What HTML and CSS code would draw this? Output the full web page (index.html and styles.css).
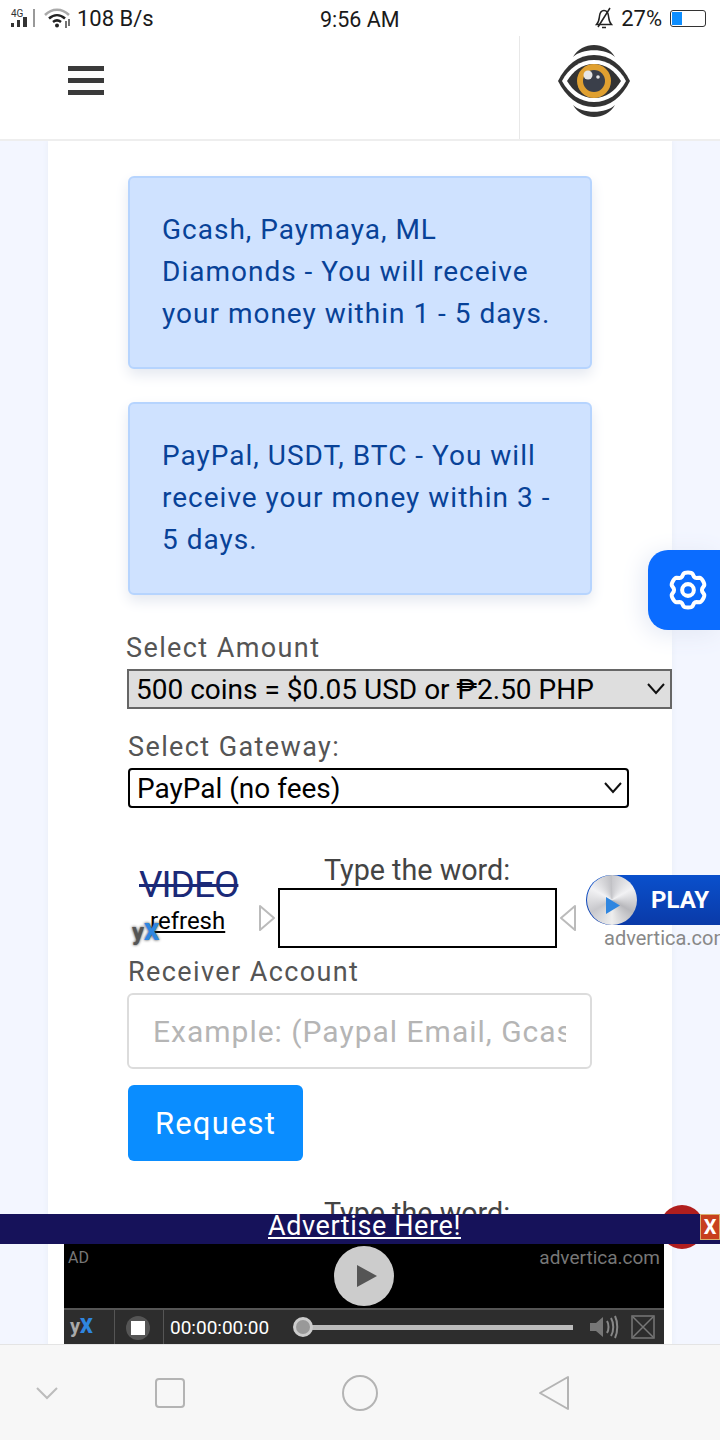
FILE: index.html
```html
<!DOCTYPE html>
<html lang="en">
<head>
  <meta charset="UTF-8">
  <meta name="viewport" content="width=device-width, initial-scale=1.0">
  <title>Withdraw</title>
  <link rel="stylesheet" href="styles.css">
</head>
<body>
<div class="screen">

  <div class="status">
    <div class="status-left">
      <svg class="status-signal" width="26" height="18" viewBox="0 0 26 18">
        <text x="1" y="8" class="status-4g">4G</text>
        <rect x="1" y="14" width="3" height="4" fill="#333"/>
        <rect x="7" y="11" width="3" height="7" fill="#333"/>
        <rect x="13" y="8" width="4" height="10" fill="#333"/>
        <rect x="23" y="0" width="2" height="18" fill="#999"/>
      </svg>
      <svg width="28" height="20" viewBox="0 0 28 20" fill="none">
        <path d="M1 7C8 0 18 0 25 7" stroke="#aaa" stroke-width="2.5"/>
        <path d="M5 10.5C10 6 16 6 21 10.5" stroke="#222" stroke-width="2.5"/>
        <path d="M9 14C11.5 12 14.5 12 17 14" stroke="#222" stroke-width="2.5"/>
        <circle cx="13" cy="17.5" r="2" fill="#222"/>
        <path d="M22 13V20M25 11V18" stroke="#444" stroke-width="1.5"/>
      </svg>
      <span class="status-speed">108 B/s</span>
    </div>
    <div class="status-time">9:56 AM</div>
    <div class="status-right">
      <svg width="18" height="22" viewBox="0 0 18 22" fill="none" stroke="#222" stroke-width="1.5">
        <path d="M1.5 17.5C4 15 4 13 4.5 9C5 5 7 3.5 9 3.5C11 3.5 13 5 13.5 9C14 13 14 15 16.5 17.5Z"/>
        <path d="M7 20.5H11M15 1L3 20"/>
      </svg>
      <span>27%</span>
      <div class="battery"><div class="battery-level"></div></div>
    </div>
  </div>

  <div class="topbar">
    <div class="menu-btn">
      <span></span><span></span><span></span>
    </div>
    <div class="logo-box">
      <svg width="72" height="72" viewBox="0 0 72 72">
        <path d="M15 12C24 -4 48 -4 57 12C48 3 24 3 15 12Z" fill="#333"/>
        <path d="M15 60C24 76 48 76 57 60C48 69 24 69 15 60Z" fill="#333"/>
        <path d="M0 36C8 20 20 10 36 10C52 10 64 20 72 36C64 52 52 62 36 62C20 62 8 52 0 36Z" fill="#333"/>
        <path d="M4 36C11 23 22 15 36 15C50 15 61 23 68 36C61 49 50 57 36 57C22 57 11 49 4 36Z" fill="#fff"/>
        <path d="M9 36C15 26 24 19 36 19C48 19 57 26 63 36C57 46 48 53 36 53C24 53 15 46 9 36Z" fill="#333"/>
        <circle cx="36" cy="36" r="17" fill="#e0a030"/>
        <circle cx="36" cy="36" r="11" fill="#3a3f4a"/>
        <circle cx="30" cy="30" r="4.5" fill="#e6e6e6"/>
        <circle cx="40" cy="32" r="1.8" fill="#e6e6e6"/>
      </svg>
    </div>
  </div>

  <div class="content">
    <div class="panel">
      <div class="alert">Gcash, Paymaya, ML Diamonds - You will receive your money within 1 - 5 days.</div>
      <div class="alert">PayPal, USDT, BTC - You will receive your money within 3 - 5 days.</div>

      <label class="field-label amount-label">Select Amount</label>
      <div class="select-wrap select-amount">
        <select class="select">
          <option>500 coins = $0.05 USD or ₱2.50 PHP</option>
        </select>
        <svg class="select-arrow" width="20" height="12" viewBox="0 0 20 12" fill="none" stroke="#111" stroke-width="2"><path d="M2 1L10 10L18 1"/></svg>
      </div>

      <label class="field-label gateway-label">Select Gateway:</label>
      <div class="select-wrap select-gateway">
        <select class="select">
          <option>PayPal (no fees)</option>
        </select>
        <svg class="select-arrow" width="20" height="12" viewBox="0 0 20 12" fill="none" stroke="#111" stroke-width="2"><path d="M2 1L10 10L18 1"/></svg>
      </div>

      <div class="captcha">
        <div class="captcha-side">
          <div class="captcha-word">VIDEO</div>
          <a class="captcha-refresh">refresh</a>
          <div class="yx-mark">y<b>X</b></div>
        </div>
        <div class="captcha-main">
          <div class="captcha-title">Type the word:</div>
          <div class="captcha-row">
            <svg class="captcha-arrow" width="18" height="26" viewBox="0 0 18 26"><path d="M2 1L16 13L2 25Z" fill="#fff" stroke="#bbb" stroke-width="2" stroke-linejoin="round"/></svg>
            <div class="captcha-input"></div>
            <svg class="captcha-arrow" width="18" height="26" viewBox="0 0 18 26"><path d="M16 1L2 13L16 25Z" fill="#fff" stroke="#bbb" stroke-width="2" stroke-linejoin="round"/></svg>
          </div>
        </div>
      </div>

      <label class="field-label receiver-label">Receiver Account</label>
      <input class="text-input" type="text" placeholder="Example: (Paypal Email, Gcash Number)">
      <button class="request-btn">Request</button>

      <div class="captcha captcha-next">
        <div class="captcha-side">
          <div class="captcha-word">VIDEO</div>
        </div>
        <div class="captcha-main">
          <div class="captcha-title">Type the word:</div>
        </div>
      </div>
    </div>
  </div>

  <div class="settings-btn">
    <svg width="44" height="44" viewBox="0 0 24 24" fill="none" stroke="#fff" stroke-width="2.2" stroke-linejoin="round">
      <path d="M9.5 3.2C10.2 2.2 13.8 2.2 14.5 3.2L15.3 4.8C15.6 5.2 16 5.4 16.5 5.4L18.3 5.3C19.5 5.4 21.3 8.5 20.8 9.6L19.8 11.1C19.6 11.6 19.6 12.4 19.8 12.9L20.8 14.4C21.3 15.5 19.5 18.6 18.3 18.7L16.5 18.6C16 18.6 15.6 18.8 15.3 19.2L14.5 20.8C13.8 21.8 10.2 21.8 9.5 20.8L8.7 19.2C8.4 18.8 8 18.6 7.5 18.6L5.7 18.7C4.5 18.6 2.7 15.5 3.2 14.4L4.2 12.9C4.4 12.4 4.4 11.6 4.2 11.1L3.2 9.6C2.7 8.5 4.5 5.4 5.7 5.3L7.5 5.4C8 5.4 8.4 5.2 8.7 4.8Z"/>
      <circle cx="12" cy="12" r="3.2"/>
    </svg>
  </div>

  <div class="play-badge">
    <div class="play-pill">
      <div class="play-disc"><svg width="14" height="17" viewBox="0 0 14 17"><path d="M0 0L14 8.5L0 17Z" fill="#2f86e0"/></svg></div>
      <span>PLAY</span>
    </div>
    <div class="play-domain">advertica.com</div>
  </div>

  <div class="ad-dock">
    <div class="ad-close-dot"></div>
    <div class="ad-strip">
      <a class="ad-link">Advertise Here!</a>
      <div class="ad-close">X</div>
    </div>
    <div class="ad-player">
      <div class="ad-screen">
        <span class="ad-tag">AD</span>
        <div class="ad-play">
          <svg width="22" height="24" viewBox="0 0 22 24"><path d="M1 1L21 12L1 23Z" fill="#555"/></svg>
        </div>
        <span class="ad-domain">advertica.com</span>
      </div>
      <div class="ad-controls">
        <div class="ctrl-cell ctrl-logo">y<b>X</b></div>
        <div class="ctrl-cell ctrl-stop"><div class="stop-disc"><span></span></div></div>
        <span class="ctrl-time">00:00:00:00</span>
        <div class="ctrl-track"><span class="ctrl-thumb"></span></div>
        <svg width="30" height="28" viewBox="0 0 30 28" fill="none">
          <path d="M1 10H7L14 4V24L7 18H1Z" fill="#777"/>
          <path d="M18 8C20 11 20 17 18 20M22 5C25 10 25 18 22 23M26 3C29 9 29 19 26 25" stroke="#888" stroke-width="2"/>
        </svg>
        <svg class="ctrl-full" width="24" height="24" viewBox="0 0 24 24" fill="none" stroke="#777" stroke-width="1.5">
          <rect x="1" y="1" width="22" height="22"/>
          <path d="M2 2L22 22M22 2L2 22"/>
        </svg>
      </div>
    </div>
  </div>

  <div class="navbar">
    <svg class="nav-down" width="24" height="14" viewBox="0 0 24 14" fill="none" stroke="#bcbcbc" stroke-width="2"><path d="M2 2L12 12L22 2"/></svg>
    <svg class="nav-recent" width="30" height="30" viewBox="0 0 30 30" fill="none" stroke="#b4b4b4" stroke-width="2"><rect x="1" y="1" width="28" height="28" rx="3"/></svg>
    <svg class="nav-home" width="36" height="36" viewBox="0 0 36 36" fill="none" stroke="#b4b4b4" stroke-width="2"><circle cx="18" cy="18" r="17"/></svg>
    <svg class="nav-back" width="32" height="36" viewBox="0 0 32 36" fill="none" stroke="#b4b4b4" stroke-width="2" stroke-linejoin="round"><path d="M30 2V34L2 18Z"/></svg>
  </div>

</div>
</body>
</html>
```

FILE: styles.css
```css
*{
  box-sizing: border-box;
}

body{
  margin: 0;
  font-family: Roboto, "Liberation Sans", sans-serif;
  background-color: white;
}

.screen{
  position: relative;
  width: 720px;
  height: 1440px;
  overflow: hidden;
  display: flex;
  flex-direction: column;
}

.status{
  height: 36px;
  flex: none;
  display: flex;
  align-items: center;
  justify-content: space-between;
  padding: 0 14px 0 10px;
  font-size: 22px;
  color: #1a1a1a;
  position: relative;
}

.status-left{
  display: flex;
  align-items: center;
  gap: 8px;
}

.status-speed{
  margin-left: -3px;
}

.status-4g{
  font-size: 10px;
  font-family: Roboto, sans-serif;
  fill: #333;
}

.status-time{
  position: absolute;
  left: 320px;
  top: 7px;
  font-size: 21.5px;
}

.status-right{
  display: flex;
  align-items: center;
  gap: 8px;
}

.battery{
  width: 36px;
  height: 17px;
  border: 1px solid #333;
  border-radius: 3px;
  padding: 1px;
}

.battery-level{
  width: 10px;
  height: 100%;
  background-color: #0d8eff;
}

.topbar{
  height: 105px;
  flex: none;
  display: flex;
  justify-content: space-between;
  border-bottom: 2px solid #eeeeee;
}

.menu-btn{
  width: 36px;
  margin: 30px 0 0 68px;
  display: flex;
  flex-direction: column;
  gap: 7px;
}

.menu-btn span{
  height: 5px;
  background-color: #3a3a3a;
}

.logo-box{
  width: 201px;
  border-left: 1px solid #e8e8e8;
  padding: 9px 0 0 38px;
}

.content{
  flex: 1;
  min-height: 0;
  overflow: hidden;
  background-color: #f3f6ff;
  padding: 0 48px;
}

.panel{
  background-color: white;
  height: 1300px;
  padding: 35px 0 0 80px;
  box-shadow: 0 0 6px #e8ecf5;
}

.alert{
  width: 464px;
  height: 193px;
  margin-bottom: 33px;
  padding: 31px 32px;
  background-color: #cfe2ff;
  border: 2px solid #b6d4fe;
  border-radius: 6px;
  color: #084298;
  font-size: 28px;
  line-height: 42px;
  letter-spacing: 1px;
  box-shadow: 0 6px 14px #e4e8f0;
}

.field-label{
  display: block;
  color: #555555;
  font-size: 27px;
  line-height: 36px;
  letter-spacing: 1.4px;
}

.amount-label{
  margin: 35px 0 3px -2px;
}

.gateway-label{
  margin: 20px 0 3px 0;
}

.receiver-label{
  margin: 6px 0 3px 0;
}

.select-wrap{
  position: relative;
  height: 40px;
}

.select{
  display: block;
  width: 100%;
  height: 100%;
  padding: 0 7px;
  font-family: Roboto, sans-serif;
  font-size: 28px;
  color: black;
  background-color: transparent;
  border: 2px solid black;
  border-radius: 4px;
  appearance: none;
}

.select-arrow{
  position: absolute;
  right: 6px;
  top: 14px;
}

.select-amount{
  width: 545px;
  margin-left: -1px;
  background-color: #dedede;
}

.select-amount .select{
  border-color: #666666;
  border-radius: 0;
}

.select-gateway{
  width: 501px;
  background-color: white;
}

.captcha{
  display: flex;
  height: 96px;
  margin-top: 44px;
}

.captcha-side{
  position: relative;
  width: 130px;
  padding: 15px 0 0 11px;
}

.captcha-word{
  color: #1b2a78;
  font-size: 37px;
  line-height: 36px;
  letter-spacing: -1px;
  text-decoration: line-through;
}

.captcha-refresh{
  display: block;
  margin: 2px 0 0 11px;
  color: black;
  font-size: 24px;
  line-height: 32px;
  text-decoration: underline;
}

.yx-mark{
  position: absolute;
  left: 4px;
  top: 65px;
  color: #555555;
  font-size: 24px;
  font-weight: 700;
  line-height: 30px;
  text-shadow: 0 0 3px #333333;
}

.yx-mark b{
  color: #2f86e0;
}

.captcha-main{
  width: 320px;
}

.captcha-title{
  margin-left: 66px;
  color: #444444;
  font-size: 28.7px;
  line-height: 36px;
}

.captcha-row{
  display: flex;
  align-items: center;
  gap: 2px;
}

.captcha-input{
  width: 279px;
  height: 60px;
  background-color: white;
  border: 2px solid black;
}

.text-input{
  display: block;
  width: 465px;
  height: 76px;
  margin-left: -1px;
  padding: 0 24px;
  font-family: Roboto, sans-serif;
  font-size: 30px;
  letter-spacing: 1px;
  border: 2px solid #dcdcdc;
  border-radius: 6px;
  background-color: white;
}

.text-input::placeholder{
  color: #b5b5b5;
}

.request-btn{
  display: block;
  width: 175px;
  height: 76px;
  margin-top: 16px;
  padding: 0;
  font-family: Roboto, sans-serif;
  font-size: 31px;
  letter-spacing: 1.2px;
  color: white;
  background-color: #0a8dff;
  border: none;
  border-radius: 6px;
}

.captcha-next{
  margin-top: 34px;
}

.settings-btn{
  position: absolute;
  right: 0;
  top: 550px;
  width: 72px;
  height: 80px;
  padding: 18px 0 0 18px;
  background-color: #0b6cff;
  border-radius: 20px 0 0 20px;
  box-shadow: -4px 4px 24px #e3e8f4;
}

.play-badge{
  position: absolute;
  left: 586px;
  top: 875px;
  width: 134px;
  overflow: hidden;
}

.play-pill{
  position: relative;
  height: 50px;
  width: 160px;
  padding: 11px 0 0 65px;
  background: linear-gradient(#0a50cc, #0a3aa8);
  border-radius: 25px;
  color: white;
  font-size: 24px;
  font-weight: 700;
  line-height: 28px;
}

.play-disc{
  position: absolute;
  left: 1px;
  top: 0;
  width: 50px;
  height: 50px;
  padding: 17px 0 0 19px;
  background: conic-gradient(#c8c8cc, #f2f2f4, #b8b8bc, #eeeeee, #c8c8cc, #f2f2f4, #c0c0c4);
  border-radius: 50%;
}

.play-domain{
  margin: 1px 0 0 18px;
  color: #888888;
  font-size: 20px;
  white-space: nowrap;
}

.ad-dock{
  position: absolute;
  left: 0;
  right: 0;
  bottom: 96px;
}

.ad-close-dot{
  position: absolute;
  left: 660px;
  top: -9px;
  width: 44px;
  height: 44px;
  background-color: #b01e1e;
  border-radius: 50%;
}

.ad-strip{
  position: relative;
  height: 30px;
  background-color: #16125a;
  padding-left: 268px;
}

.ad-link{
  color: white;
  font-size: 27px;
  line-height: 25px;
  letter-spacing: 0.6px;
  text-decoration: underline;
}

.ad-close{
  position: absolute;
  right: 0;
  top: 0;
  width: 20px;
  height: 26px;
  background-color: #c8401e;
  border: 1px solid #d8b070;
  color: white;
  font-size: 20px;
  font-weight: 700;
  line-height: 24px;
  text-align: center;
}

.ad-player{
  width: 600px;
  margin-left: 64px;
  background-color: white;
}

.ad-screen{
  position: relative;
  height: 64px;
  background-color: black;
  display: flex;
  justify-content: space-between;
  padding: 3px 4px;
  color: #777777;
  font-size: 19px;
  line-height: 22px;
}

.ad-tag{
  font-size: 16px;
}

.ad-play{
  position: absolute;
  left: 270px;
  top: 2px;
  width: 60px;
  height: 60px;
  padding: 18px 0 0 22px;
  background-color: #cccccc;
  border-radius: 50%;
}

.ad-controls{
  height: 36px;
  display: flex;
  align-items: center;
  background-color: #2d2d2d;
  border-top: 2px solid #555555;
}

.ctrl-cell{
  height: 100%;
  border-right: 1px solid #555555;
}

.ctrl-logo{
  width: 51px;
  padding-left: 6px;
  color: #aaaaaa;
  font-size: 20px;
  font-weight: 700;
  line-height: 32px;
}

.ctrl-logo b{
  color: #2f86e0;
}

.ctrl-stop{
  width: 49px;
  padding: 6px 0 0 11px;
}

.stop-disc{
  width: 24px;
  height: 24px;
  padding: 5px;
  background-color: #555555;
  border-radius: 50%;
}

.stop-disc span{
  display: block;
  width: 14px;
  height: 14px;
  background-color: white;
}

.ctrl-time{
  margin-left: 6px;
  color: white;
  font-size: 19px;
}

.ctrl-track{
  position: relative;
  width: 271px;
  height: 5px;
  margin: 0 16px 0 33px;
  background-color: #bbbbbb;
}

.ctrl-thumb{
  position: absolute;
  left: -9px;
  top: -8px;
  width: 20px;
  height: 20px;
  background-color: #999999;
  border: 3px solid #cccccc;
  border-radius: 50%;
}

.ctrl-full{
  margin-left: 12px;
}

.navbar{
  height: 96px;
  flex: none;
  display: flex;
  align-items: center;
  background-color: #f7f7f7;
  border-top: 1px solid #e4e4e4;
  padding-left: 35px;
}

.nav-recent{
  margin-left: 96px;
}

.nav-home{
  margin-left: 157px;
}

.nav-back{
  margin-left: 160px;
}
```
